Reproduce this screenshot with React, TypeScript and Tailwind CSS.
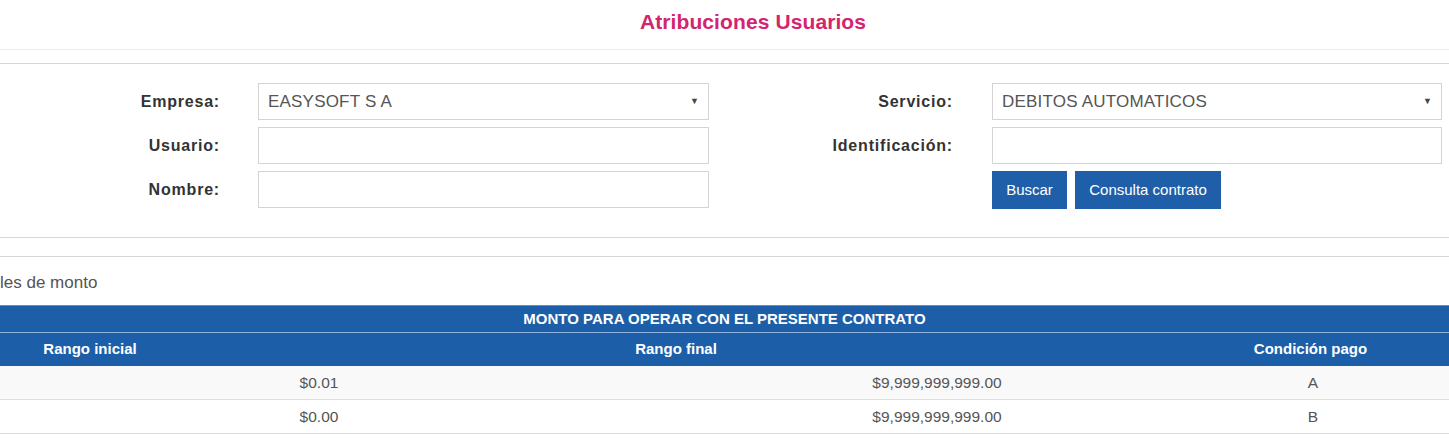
const empresaRows = [
    { label: "Empresa:", kind: "select", value: "EASYSOFT S A" },
    { label: "Usuario:", kind: "input", value: "" },
    { label: "Nombre:", kind: "input", value: "" },
];

const montos = [
    { inicial: "$0.01", final: "$9,999,999,999.00", condicion: "A" },
    { inicial: "$0.00", final: "$9,999,999,999.00", condicion: "B" },
];

const SelectBox = ({ value }: { value: string }) => (
    <div className="h-[37px] w-full border border-[#d4d4d4] bg-white flex items-center justify-between pl-[9px] pr-[9px]">
        <span className="text-[17px] text-[#555] tracking-[0.2px]">{value}</span>
        <span className="text-[9px] text-[#444]">▼</span>
    </div>
);

const TextBox = () => <div className="h-[37px] w-full border border-[#d4d4d4] bg-white" />;

const App = () => {
    return (
        <div
            className="w-[1449px] h-[438px] overflow-hidden bg-white"
            style={{ fontFamily: "'Liberation Sans', Arial, sans-serif" }}
        >
            <div className="h-[50px] flex justify-center pt-[6px] pl-[57px] border-b border-[#ebebeb]">
                <h1 className="text-[21px] font-bold text-[#d3246f] tracking-[0.1px]">Atribuciones Usuarios</h1>
            </div>

            <div className="mt-[13px] border-t border-[#d6d6d6] pt-[19px] pb-[28px] border-b">
                <div className="flex">
                    <div className="flex flex-col gap-[7px]">
                        {empresaRows.map((row) => (
                            <div key={row.label} className="flex items-center gap-[38px]">
                                <label className="w-[220px] text-right text-[16px] font-bold text-[#333] tracking-[0.8px]">
                                    {row.label}
                                </label>
                                <div className="w-[451px]">
                                    {row.kind === "select" ? <SelectBox value={row.value} /> : <TextBox />}
                                </div>
                            </div>
                        ))}
                    </div>

                    <div className="flex flex-col gap-[7px]">
                        <div className="flex items-center gap-[39px]">
                            <label className="w-[244px] text-right text-[16px] font-bold text-[#333] tracking-[0.8px]">
                                Servicio:
                            </label>
                            <div className="w-[450px]">
                                <SelectBox value="DEBITOS AUTOMATICOS" />
                            </div>
                        </div>
                        <div className="flex items-center gap-[39px]">
                            <label className="w-[244px] text-right text-[16px] font-bold text-[#333] tracking-[0.8px]">
                                Identificación:
                            </label>
                            <div className="w-[450px]">
                                <TextBox />
                            </div>
                        </div>
                        <div className="flex gap-[8px] pl-[283px]">
                            <button className="h-[38px] w-[75px] bg-[#1f5fa9] text-white text-[15px]">Buscar</button>
                            <button className="h-[38px] w-[146px] bg-[#1f5fa9] text-white text-[15px]">
                                Consulta contrato
                            </button>
                        </div>
                    </div>
                </div>
            </div>

            <div className="mt-[18px] border-t border-[#d6d6d6] pt-[16px]">
                <p className="text-[17px] text-[#555] leading-[20px]">les de monto</p>

                <div className="mt-[12px]">
                    <div className="h-[27px] bg-[#1c5ea8] border-t border-[#5b8ccb] flex items-center justify-center text-[15px] font-bold text-white">
                        MONTO PARA OPERAR CON EL PRESENTE CONTRATO
                    </div>
                    <div className="h-[1px] bg-[#8fb3dc]" />
                    <div className="h-[33px] bg-[#1c5ea8] grid grid-cols-[180px_992px_1fr] items-center text-[15px] font-bold text-white text-center">
                        <span>Rango inicial</span>
                        <span>Rango final</span>
                        <span>Condición pago</span>
                    </div>
                    {montos.map((m, i) => (
                        <div
                            key={m.condicion}
                            className={
                                "h-[34px] grid grid-cols-[638px_598px_154px_1fr] items-center text-[15.5px] text-[#555] text-center border-b border-[#dddddd] " +
                                (i % 2 === 0 ? "bg-[#f9f9f9]" : "bg-white")
                            }
                        >
                            <span>{m.inicial}</span>
                            <span>{m.final}</span>
                            <span>{m.condicion}</span>
                            <span />
                        </div>
                    ))}
                </div>
            </div>
        </div>
    );
};

export default App;
